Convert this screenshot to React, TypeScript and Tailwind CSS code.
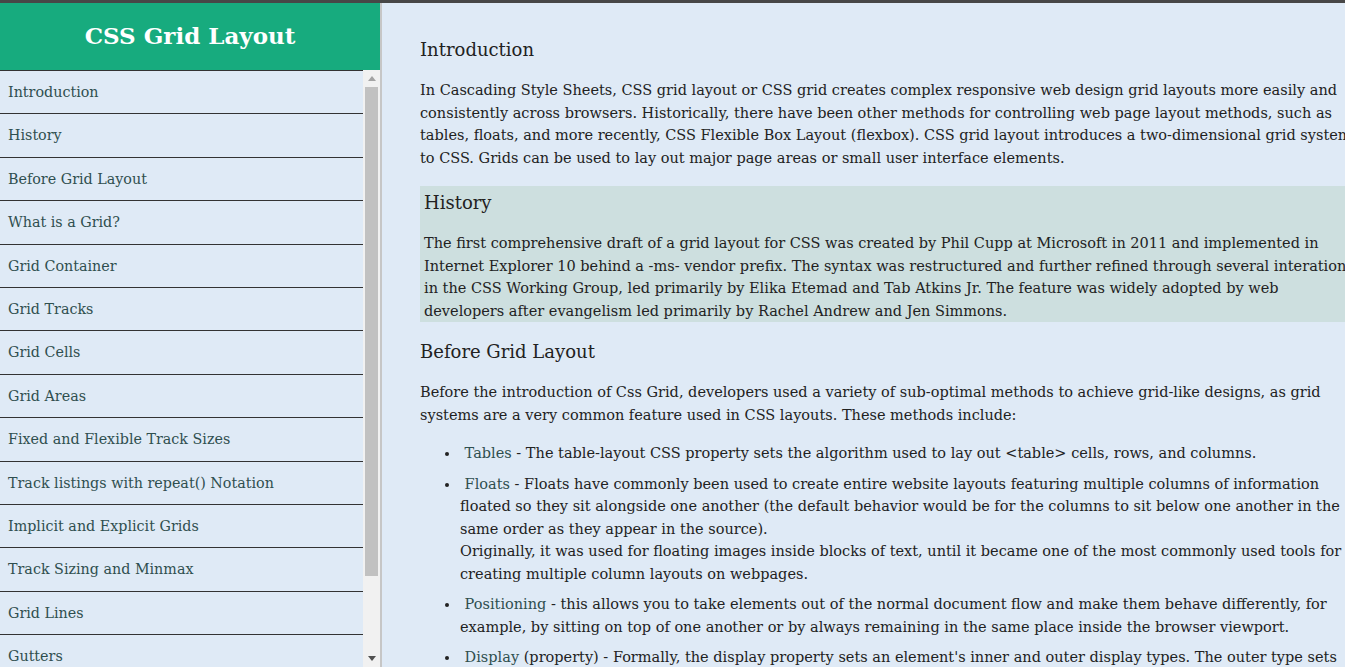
import React from 'react';

const navItems = [
  'Introduction',
  'History',
  'Before Grid Layout',
  'What is a Grid?',
  'Grid Container',
  'Grid Tracks',
  'Grid Cells',
  'Grid Areas',
  'Fixed and Flexible Track Sizes',
  'Track listings with repeat() Notation',
  'Implicit and Explicit Grids',
  'Track Sizing and Minmax',
  'Grid Lines',
  'Gutters',
  'Nesting Grids',
  'Conclusion',
];

const serif = { fontFamily: '"DejaVu Serif", Georgia, serif' };

// classic scrollbar look, drawn since the headless page hides native ones
function FakeScrollbar() {
  return (
    <div className="flex w-[17px] shrink-0 flex-col bg-[#f1f1f1]">
      <div className="flex h-[17px] shrink-0 items-center justify-center">
        <svg width="8" height="5" viewBox="0 0 8 5">
          <polygon points="4,0 8,5 0,5" fill="#a3a3a3" />
        </svg>
      </div>
      <div className="mx-[2px] mt-[0px] h-[489px] bg-[#c1c1c1]" />
      <div className="flex-1" />
      <div className="flex h-[17px] shrink-0 items-center justify-center">
        <svg width="8" height="5" viewBox="0 0 8 5">
          <polygon points="0,0 8,0 4,5" fill="#505050" />
        </svg>
      </div>
    </div>
  );
}

function Sidebar() {
  return (
    <aside className="flex h-full w-[382px] shrink-0 flex-col border-r-2 border-[#c6c6c6] bg-[#dfeaf6]">
      <header className="flex h-[67px] shrink-0 items-center justify-center bg-[#17ab7e]">
        <h1 className="text-[23px] font-bold text-white">CSS Grid Layout</h1>
      </header>
      <div className="flex min-h-0 flex-1">
        <nav className="min-w-0 flex-1 overflow-hidden">
          {navItems.map((item) => (
            <a
              key={item}
              href={`#${item}`}
              className="block border-t border-[#333] py-[10px] pl-2 text-[14.3px] leading-[22.4px] text-[#2f4f4f]"
            >
              {item}
            </a>
          ))}
        </nav>
        <FakeScrollbar />
      </div>
    </aside>
  );
}

function Item({ name, children }: { name: string; children: React.ReactNode }) {
  return (
    <li className="mb-2">
      {'\u00a0'}
      <a href="#" className="text-[#2f4f4f]">
        {name}
      </a>{' '}
      {children}
    </li>
  );
}

export default function App() {
  return (
    <div className="flex h-[667px] flex-col overflow-hidden bg-[#dfeaf6] text-[#222]" style={serif}>
      <div className="h-[3px] shrink-0 bg-[#474747]" />
      <div className="flex min-h-0 flex-1">
        <Sidebar />
        <main className="min-w-0 flex-1 overflow-hidden pt-[32px] pl-[38px]">
          <section className="w-[935px]">
            <h2 className="text-[18px] leading-[30px]">Introduction</h2>
            <p className="mt-[14px] text-[14.5px] leading-[22.5px]">
              In Cascading Style Sheets, CSS grid layout or CSS grid creates complex responsive web design grid
              layouts more easily and consistently across browsers. Historically, there have been other methods for
              controlling web page layout methods, such as tables, floats, and more recently, CSS Flexible Box Layout
              (flexbox). CSS grid layout introduces a two-dimensional grid system to CSS. Grids can be used to lay out
              major page areas or small user interface elements.
            </p>
          </section>

          <section className="mt-[17px] w-[935px] bg-[#cddfdf] pt-[2px] pl-1">
            <h2 className="text-[18px] leading-[30px]">History</h2>
            <p className="mt-[14px] text-[14.5px] leading-[22.5px]">
              The first comprehensive draft of a grid layout for CSS was created by Phil Cupp at Microsoft in 2011 and
              implemented in Internet Explorer 10 behind a -ms- vendor prefix. The syntax was restructured and further
              refined through several interations in the CSS Working Group, led primarily by Elika Etemad and Tab
              Atkins Jr. The feature was widely adopted by web developers after evangelism led primarily by Rachel
              Andrew and Jen Simmons.
            </p>
          </section>

          <section className="mt-[15px] w-[935px]">
            <h2 className="text-[18px] leading-[30px]">Before Grid Layout</h2>
            <p className="mt-[14px] text-[14.5px] leading-[22.5px]">
              Before the introduction of Css Grid, developers used a variety of sub-optimal methods to achieve
              grid-like designs, as grid systems are a very common feature used in CSS layouts. These methods include:
            </p>
            <ul className="mt-4 list-disc pl-10 text-[14.5px] leading-[22.5px]">
              <Item name="Tables">
                - The table-layout CSS property sets the algorithm used to lay out &lt;table&gt; cells, rows, and
                columns.
              </Item>
              <Item name="Floats">
                - Floats have commonly been used to create entire website layouts featuring multiple columns of
                information floated so they sit alongside one another (the default behavior would be for the columns
                to sit below one another in the same order as they appear in the source).
                <br />
                Originally, it was used for floating images inside blocks of text, until it became one of the most
                commonly used tools for creating multiple column layouts on webpages.
              </Item>
              <Item name="Positioning">
                - this allows you to take elements out of the normal document flow and make them behave differently,
                for example, by sitting on top of one another or by always remaining in the same place inside the
                browser viewport.
              </Item>
              <Item name="Display">
                (property) - Formally, the display property sets an element's inner and outer display types. The outer
                type sets whether an element is treated as a block or inline element.
              </Item>
            </ul>
          </section>
        </main>
      </div>
    </div>
  );
}
